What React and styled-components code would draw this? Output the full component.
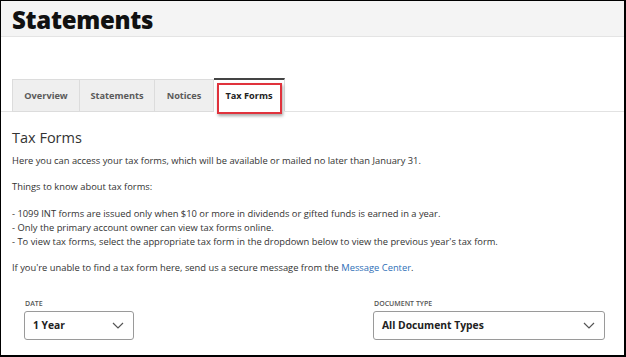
import React from "react";
import styled, { createGlobalStyle } from "styled-components";

const Global = createGlobalStyle`
  html, body { margin: 0; padding: 0; background: #fff; }
  body { font-family: "Open Sans", "Noto Sans", sans-serif; color: #333; }
  * { box-sizing: border-box; }
`;

const Frame = styled.div`
  width: 626px;
  height: 357px;
  border-left: 1px solid #000;
  border-top: 1px solid #000;
  border-right: 2px solid #000;
  border-bottom: 2px solid #000;
  overflow: hidden;
  display: flex;
  flex-direction: column;
`;

const Header = styled.header`
  height: 36px;
  background: #f4f4f4;
  border-bottom: 1px solid #e4e4e4;
  padding: 0 11px;
  display: flex;
  align-items: center;
`;

const Title = styled.h1`
  margin: 0;
  font-family: "Open Sans", sans-serif;
  font-weight: 800;
  font-size: 24px;
  color: #111;
  letter-spacing: -0.3px;
  line-height: 1;
  padding-top: 2px;
`;

const TabBar = styled.nav`
  margin-top: 41px;
  padding-left: 11px;
  display: flex;
  align-items: flex-end;
  border-bottom: 1px solid #e2e2e2;
`;

const Tab = styled.div`
  position: relative;
  width: ${(p) => p.$w}px;
  height: ${(p) => (p.$active ? "34px" : "33px")};
  margin-bottom: -1px;
  display: flex;
  align-items: center;
  justify-content: center;
  font-size: 9.2px;
  font-weight: 700;
  color: ${(p) => (p.$active ? "#222" : "#5a5a5a")};
  background: ${(p) => (p.$active ? "#fff" : "#efefef")};
  border: 1px solid #dcdcdc;
  border-top: ${(p) => (p.$active ? "2px solid #444" : "1px solid #dcdcdc")};
  border-bottom: ${(p) => (p.$active ? "1px solid #fff" : "1px solid #dcdcdc")};
  & + & { border-left: none; }
`;

const Highlight = styled.span`
  position: absolute;
  left: 3px;
  right: 2px;
  top: 3px;
  bottom: -3px;
  border: 2px solid #e0323c;
  box-shadow: 1px 2px 3px rgba(0, 0, 0, 0.35);
  pointer-events: none;
`;

const Content = styled.section`
  padding: 16px 11px 0;
`;

const Heading = styled.h2`
  margin: 0 0 6px;
  font-weight: 400;
  font-size: 14.5px;
  color: #333;
  line-height: 20px;
`;

const Para = styled.p`
  margin: 0 0 ${(p) => p.$gap ?? 12}px;
  font-size: 9.35px;
  line-height: 14.3px;
  color: #333;
`;

const Link = styled.a`
  color: #2f6fb7;
  text-decoration: none;
`;

const Filters = styled.div`
  margin-top: 23px;
  padding: 0 19px 0 23px;
  display: flex;
  justify-content: space-between;
`;

const Field = styled.div`
  display: flex;
  flex-direction: column;
  gap: 3px;
`;

const Label = styled.label`
  font-size: 7px;
  font-weight: 600;
  color: #555;
  text-transform: uppercase;
  padding-left: 1px;
`;

const Select = styled.div`
  width: ${(p) => p.$w}px;
  height: 29px;
  border: 1px solid #9a9a9a;
  border-radius: 3px;
  padding: 0 9px 0 8px;
  display: flex;
  align-items: center;
  justify-content: space-between;
  font-size: 10.3px;
  font-weight: 700;
  color: #222;
`;

const Chevron = () => (
  <svg width="12" height="7" viewBox="0 0 12 7" fill="none">
    <path d="M1 1l5 5 5-5" stroke="#555" strokeWidth="1.2" />
  </svg>
);

export default function App() {
  return (
    <>
      <Global />
      <Frame>
        <Header>
          <Title>Statements</Title>
        </Header>
        <TabBar>
          <Tab $w={68}>Overview</Tab>
          <Tab $w={75}>Statements</Tab>
          <Tab $w={59}>Notices</Tab>
          <Tab $w={71} $active>
            Tax Forms
            <Highlight />
          </Tab>
        </TabBar>
        <Content>
          <Heading>Tax Forms</Heading>
          <Para>
            Here you can access your tax forms, which will be available or mailed no later than January 31.
          </Para>
          <Para>Things to know about tax forms:</Para>
          <Para>
            - 1099 INT forms are issued only when $10 or more in dividends or gifted funds is earned in a year.
            <br />- Only the primary account owner can view tax forms online.
            <br />- To view tax forms, select the appropriate tax form in the dropdown below to view the previous year's tax form.
          </Para>
          <Para $gap={0}>
            If you're unable to find a tax form here, send us a secure message from the <Link href="#">Message Center</Link>.
          </Para>
        </Content>
        <Filters>
          <Field>
            <Label>Date</Label>
            <Select $w={110}>
              1 Year
              <Chevron />
            </Select>
          </Field>
          <Field>
            <Label>Document Type</Label>
            <Select $w={232}>
              All Document Types
              <Chevron />
            </Select>
          </Field>
        </Filters>
      </Frame>
    </>
  );
}
